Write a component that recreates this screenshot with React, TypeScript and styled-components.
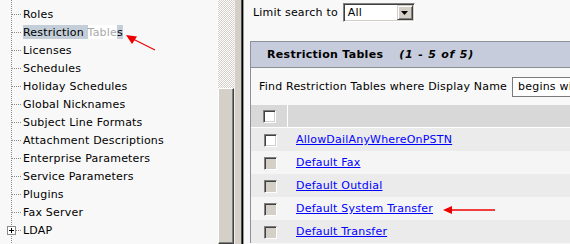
import React from "react";
import styled, { createGlobalStyle } from "styled-components";

const GlobalStyle = createGlobalStyle`
  html, body {
    margin: 0;
    padding: 0;
    width: 570px;
    height: 244px;
    overflow: hidden;
    background: #f8f8f8;
  }
  body {
    font-family: "DejaVu Sans", Verdana, sans-serif;
    font-size: 11px;
    letter-spacing: 0.2px;
    color: #000;
  }
`;

const Frame = styled.div`
  position: relative;
  display: flex;
  width: 570px;
  height: 244px;
  overflow: hidden;
`;

/* ---------- left tree ---------- */

const TreePane = styled.div`
  width: 218px;
  flex: none;
  background: #f8f8f8;
  overflow: hidden;
`;

const TreeList = styled.ul`
  list-style: none;
  margin: -12px 0 0;
  padding: 0;
`;

const TreeItem = styled.li`
  position: relative;
  height: 18px;
  line-height: 18px;
  padding-left: 23px;
  white-space: nowrap;
  &::before {
    content: "";
    position: absolute;
    left: 11px;
    top: 0;
    bottom: 0;
    width: 1px;
    background: repeating-linear-gradient(to bottom, #8a8a8a 0 1px, transparent 1px 2px);
  }
  &::after {
    content: "";
    position: absolute;
    left: 12px;
    top: 8px;
    width: 10px;
    height: 1px;
    background: repeating-linear-gradient(to right, #8a8a8a 0 1px, transparent 1px 2px);
  }
`;

const Expander = styled.svg`
  position: absolute;
  left: 7px;
  top: 4px;
  z-index: 1;
`;

const Selected = styled.span<{ $ghost?: boolean }>`
  padding-top: 1px;
  background: ${(p) => (p.$ghost ? "#ffffff" : "#c3ced8")};
  color: ${(p) => (p.$ghost ? "#a9a9a9" : "#000")};
`;

/* ---------- scrollbar + splitter ---------- */

const ScrollBar = styled.div`
  width: 16px;
  flex: none;
  display: flex;
  flex-direction: column;
`;

const Track = styled.div`
  height: 88px;
  flex: none;
  background-color: #fff;
  background-image: conic-gradient(#d4d0c8 25%, #fff 0 50%, #d4d0c8 0 75%, #fff 0);
  background-size: 2px 2px;
`;

const Thumb = styled.div`
  flex: 1;
  box-sizing: border-box;
  background: #d4d0c8;
  border: 1px solid;
  border-color: #fff #404040 #404040 #fff;
  box-shadow: inset -1px -1px #808080;
`;

const Splitter = styled.div`
  width: 10px;
  flex: none;
  box-sizing: border-box;
  background: #d4d0c8;
  border-left: 1px solid #ededed;
  box-shadow: inset -1px 0 #9a9a9a, inset -2px 0 #000, inset -3px 0 #505050;
`;

/* ---------- right content ---------- */

const ContentPane = styled.div`
  flex: 1;
  min-width: 0;
  background: #f8f8f8;
  padding-left: 6px;
  overflow: hidden;
`;

const TopBar = styled.div`
  display: flex;
  align-items: center;
  gap: 5px;
  height: 25px;
  padding-left: 3px;
  margin-bottom: 16px;
`;

const SelectBox = styled.div`
  display: flex;
  align-items: center;
  justify-content: space-between;
  box-sizing: border-box;
  width: 72px;
  height: 19px;
  background: #fff;
  border: 1px solid;
  border-color: #808080 #fff #fff #808080;
  box-shadow: inset 1px 1px #404040, inset -1px -1px #d4d0c8;
  padding: 1px 1px 1px 4px;
`;

const DropButton = styled.div`
  display: flex;
  align-items: center;
  justify-content: center;
  box-sizing: border-box;
  width: 16px;
  height: 15px;
  background: #d4d0c8;
  border: 1px solid;
  border-color: #d4d0c8 #404040 #404040 #d4d0c8;
  box-shadow: inset 1px 1px #fff, inset -1px -1px #808080;
`;

const Table = styled.div`
  width: 420px;
  border-left: 1px solid #8c9099;
  border-top: 1px solid #8c9099;
`;

const TitleBand = styled.div`
  display: flex;
  align-items: center;
  height: 25px;
  background: #c6ccdc;
  border-bottom: 1px solid #8c9099;
  padding-left: 16px;
  font-weight: bold;
  letter-spacing: 0.3px;
`;

const Count = styled.span`
  margin-left: 16px;
  font-style: italic;
  letter-spacing: 0.8px;
`;

const FindRow = styled.div`
  display: flex;
  align-items: center;
  gap: 5px;
  height: 37px;
  background: #f8f8f8;
  padding-left: 8px;
  white-space: nowrap;
`;

const FindInput = styled.div`
  box-sizing: border-box;
  height: 20px;
  width: 120px;
  background: #fff;
  border: 1px solid #7a7a7a;
  padding-left: 5px;
  line-height: 18px;
`;

const GridRow = styled.div<{ $tone: "head" | "odd" | "even" }>`
  display: flex;
  align-items: stretch;
  height: ${(p) => (p.$tone === "head" ? "22px" : "23px")};
  background: ${(p) =>
    p.$tone === "head" ? "#d8d8d8" : p.$tone === "odd" ? "#ebebeb" : "#f5f5f5"};
  border-bottom: ${(p) => (p.$tone === "head" ? "1px solid #fff" : "none")};
`;

const CheckCell = styled.div<{ $head?: boolean }>`
  box-sizing: border-box;
  width: 37px;
  flex: none;
  padding-left: ${(p) => (p.$head ? "12px" : "13px")};
  padding-top: ${(p) => (p.$head ? "5px" : "6px")};
  border-right: ${(p) => (p.$head ? "1px solid #fff" : "none")};
`;

const NameCell = styled.div`
  display: flex;
  align-items: center;
  padding-left: 8px;
  white-space: nowrap;
`;

const CheckBox = styled.span<{ $disabled?: boolean }>`
  display: block;
  box-sizing: border-box;
  width: 13px;
  height: 13px;
  border: 1px solid;
  border-color: #808080 #fff #fff #808080;
  box-shadow: inset 1px 1px #404040, inset -1px -1px #d4d0c8;
  background: ${(p) => (p.$disabled ? "#d4d0c8" : "#fff")};
`;

const Link = styled.a`
  color: #0000ff;
  text-decoration: underline;
`;

const Annotations = styled.svg`
  position: absolute;
  left: 0;
  top: 0;
  pointer-events: none;
`;

const treeItems = [
  "Authentication Rules",
  "Roles",
  "__selected__",
  "Licenses",
  "Schedules",
  "Holiday Schedules",
  "Global Nicknames",
  "Subject Line Formats",
  "Attachment Descriptions",
  "Enterprise Parameters",
  "Service Parameters",
  "Plugins",
  "Fax Server",
  "+LDAP",
  "+Networking",
];

const rows = [
  { name: "AllowDailAnyWhereOnPSTN", disabled: false },
  { name: "Default Fax", disabled: true },
  { name: "Default Outdial", disabled: true },
  { name: "Default System Transfer", disabled: true },
  { name: "Default Transfer", disabled: true },
];

function PlusBox() {
  return (
    <Expander width="9" height="9" viewBox="0 0 9 9">
      <rect x="0.5" y="0.5" width="8" height="8" fill="#fff" stroke="#8a8a8a" />
      <path d="M2 4.5h5M4.5 2v5" stroke="#000" strokeWidth="1" />
    </Expander>
  );
}

export default function App() {
  return (
    <>
      <GlobalStyle />
      <Frame>
        <TreePane>
          <TreeList>
            {treeItems.map((item) => {
              if (item === "__selected__") {
                return (
                  <TreeItem key={item}>
                    <Selected>Restriction </Selected>
                    <Selected $ghost>Table</Selected>
                    <Selected>s</Selected>
                  </TreeItem>
                );
              }
              const expandable = item.startsWith("+");
              return (
                <TreeItem key={item}>
                  {expandable && <PlusBox />}
                  {expandable ? item.slice(1) : item}
                </TreeItem>
              );
            })}
          </TreeList>
        </TreePane>
        <ScrollBar>
          <Track />
          <Thumb />
        </ScrollBar>
        <Splitter />
        <ContentPane>
          <TopBar>
            <span>Limit search to</span>
            <SelectBox>
              <span>All</span>
              <DropButton>
                <svg width="7" height="4" viewBox="0 0 7 4">
                  <path d="M0 0h7L3.5 4z" fill="#000" />
                </svg>
              </DropButton>
            </SelectBox>
          </TopBar>
          <Table>
            <TitleBand>
              <span>Restriction Tables</span>
              <Count>(1 - 5 of 5)</Count>
            </TitleBand>
            <FindRow>
              <span>Find Restriction Tables where Display Name</span>
              <FindInput>begins with</FindInput>
            </FindRow>
            <GridRow $tone="head">
              <CheckCell $head>
                <CheckBox />
              </CheckCell>
              <NameCell />
            </GridRow>
            {rows.map((r, i) => (
              <GridRow key={r.name} $tone={i % 2 === 0 ? "odd" : "even"}>
                <CheckCell>
                  <CheckBox $disabled={r.disabled} />
                </CheckCell>
                <NameCell>
                  <Link href="#">{r.name}</Link>
                </NameCell>
              </GridRow>
            ))}
          </Table>
        </ContentPane>
        <Annotations width="570" height="244" viewBox="0 0 570 244">
          <line x1="155" y1="50" x2="133" y2="39" stroke="#ee0000" strokeWidth="1.2" />
          <polygon points="126,35 137,36.5 132,44" fill="#ee0000" />
          <line x1="450" y1="210" x2="495" y2="210" stroke="#ee0000" strokeWidth="1.3" />
          <polygon points="443,210 452,206 452,214" fill="#ee0000" />
        </Annotations>
      </Frame>
    </>
  );
}
